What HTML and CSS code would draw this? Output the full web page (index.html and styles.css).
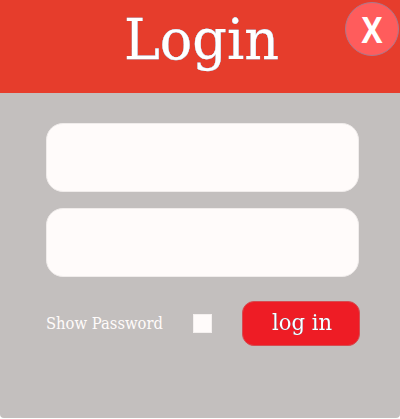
FILE: index.html
```html
<!DOCTYPE html>
<html lang="en">
<head>
<meta charset="utf-8">
<title>Login</title>
<link rel="stylesheet" href="styles.css">
</head>
<body>
<main class="dialog">
  <header class="header">
    <svg class="title" width="160" height="80" role="heading" aria-level="1"><text x="4" y="58.7" textLength="155" lengthAdjust="spacingAndGlyphs">Login</text></svg>
    <button class="close" type="button" aria-label="Close"><svg width="54" height="54"><text x="16.5" y="41" textLength="21" lengthAdjust="spacingAndGlyphs">X</text></svg></button>
  </header>
  <form class="form">
    <input class="field" type="text" aria-label="Username">
    <input class="field" type="password" aria-label="Password">
    <div class="actions">
      <label class="show" for="show"><svg width="125" height="30"><text x="0" y="19.5" textLength="117" lengthAdjust="spacingAndGlyphs">Show Password</text></svg></label>
      <input class="check" id="show" type="checkbox">
      <button class="submit" type="button"><svg width="117" height="45"><text x="30" y="29.2" textLength="60" lengthAdjust="spacingAndGlyphs">log in</text></svg></button>
    </div>
  </form>
</main>
</body>
</html>
```
FILE: styles.css
```css
* { box-sizing: border-box; }
body { margin: 0; background: #fff; overflow: hidden; }
svg { display: block; overflow: visible; }
.dialog { width: 400px; height: 418px; background: #c3bfbe; border-radius: 0 0 4px 4px; overflow: hidden; }
.header { position: relative; height: 93px; background: #e63d2c; padding-left: 120px; }
.title, .show, .submit { font-family: "DejaVu Serif", serif; }
.title { font-size: 56.5px; fill: #fff; stroke: #fff; stroke-width: .3px; filter: drop-shadow(0 0 .6px #5274a8); }
.close { position: absolute; left: 344.5px; top: 1.5px; width: 54px; height: 54px; padding: 0; border: 1px solid #a9798e; border-radius: 50%; background: #ff5c5c; }
.close svg { margin: -1px; }
.close text { font: bold 36px "Open Sans", sans-serif; fill: #fff; }
.form { display: flex; flex-direction: column; gap: 16px; padding: 30px 40px 0 46px; }
.field { width: 313px; height: 69px; margin: 0; padding: 0 18px; border: 1px solid #f0eceb; border-radius: 17px; background: #fffbfa; font-size: 22px; outline: none; }
.actions { display: flex; align-items: center; margin-top: 8px; }
.show { width: 147px; font-size: 15.8px; fill: #fffbfa; }
.check { appearance: none; width: 19px; height: 19px; margin: 0 30px 0 0; background: #fffbfa; border: 1px solid #f4f0ef; }
.submit { width: 118px; height: 45px; padding: 0; border: 1px solid #d54c51; border-radius: 12px; background: #ee1c25; font-size: 21.8px; fill: #fff; }
.submit svg { margin: -1px; }
.submit text { filter: drop-shadow(0 0 .5px #35597a); }
```
